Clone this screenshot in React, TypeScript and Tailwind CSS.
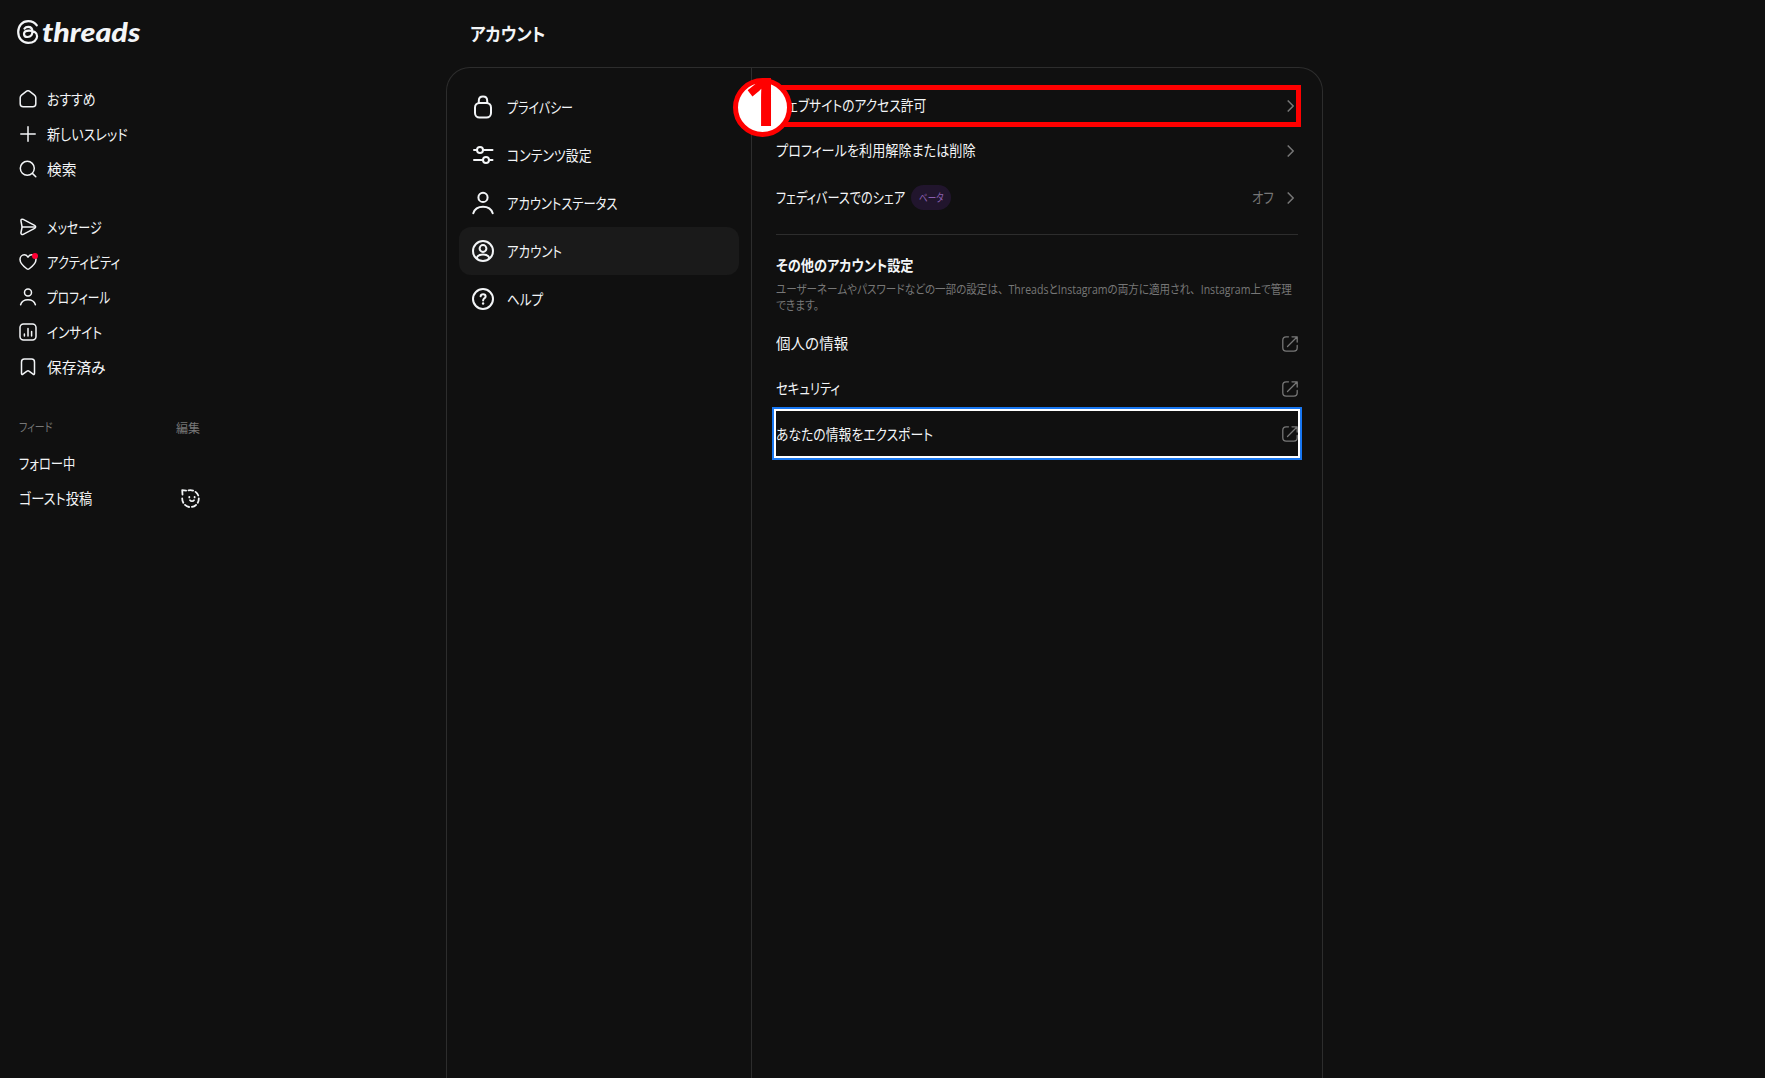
import type { ReactNode } from "react";
import { twMerge } from "tailwind-merge";

const Icon: React.FC<{
  className?: string;
  box?: number;
  stroke?: number;
  children: ReactNode;
}> = (props) => (
  <svg
    className={twMerge("size-[18px] shrink-0", props.className)}
    viewBox={`0 0 ${props.box ?? 18} ${props.box ?? 18}`}
    fill="none"
    stroke="currentColor"
    strokeWidth={props.stroke ?? 1.5}
    strokeLinecap="round"
    strokeLinejoin="round"
  >
    {props.children}
  </svg>
);

const Label: React.FC<{ className?: string; children: ReactNode }> = (
  props,
) => (
  <span
    className={twMerge(
      "block origin-left scale-x-[0.82] whitespace-nowrap",
      props.className,
    )}
  >
    {props.children}
  </span>
);

const Logo = () => (
  <div className="flex h-8 items-center pl-[17px] text-[#f3f5f7]">
    <svg
      className="h-6 w-[22px]"
      viewBox="0 0 22 24"
      fill="none"
      stroke="currentColor"
      strokeWidth="2.2"
      strokeLinecap="round"
    >
      <path d="M19.800 5.400C18 2.600 14.900 1.100 11.200 1.100 5.300 1.100 1.200 5.600 1.200 12s4.100 10.900 10 10.900c5.200 0 8.900-2.700 8.900-6.600 0-3.900-3.700-5.700-8-5.700-3.300 0-5.100 1.400-5.100 3.300s1.600 3.100 3.700 3.100c3.100 0 4.700-2 4.700-5.400 0-3.200-1.500-4.800-4.200-4.800-1.600 0-2.900.6-3.700 1.800" />
    </svg>
    <span className="ml-[3px] origin-left scale-x-[1.17] font-[Lato] text-[26px] leading-8 font-black italic">
      threads
    </span>
  </div>
);

const NavItem: React.FC<{
  icon: ReactNode;
  label: string;
  className?: string;
}> = (props) => (
  <a className="flex h-[35px] items-center gap-[10px] pl-[19px]">
    {props.icon}
    <Label className={props.className}>{props.label}</Label>
  </a>
);

const Sidebar = () => (
  <nav className="flex w-[220px] shrink-0 flex-col pt-4">
    <Logo />
    <div className="mt-[33px] flex flex-col">
      <NavItem
        label="おすすめ"
        className="scale-x-[0.86]"
        icon={
          <Icon>
            <path d="M1.200 7.800c0-1.100.4-2 1.300-2.700L7.600 1.200c.9-.6 1.900-.6 2.800 0l5.100 3.900c.9.7 1.300 1.600 1.300 2.700v6c0 2-1 3-3 3H4.200c-2 0-3-1-3-3z" />
          </Icon>
        }
      />
      <NavItem
        label="新しいスレッド"
        className="scale-x-[0.875]"
        icon={
          <Icon>
            <path d="M9 1.800v14.400M1.800 9h14.400" />
          </Icon>
        }
      />
      <NavItem
        label="検索"
        className="scale-x-[0.98]"
        icon={
          <Icon>
            <circle cx="8.300" cy="8.300" r="7" />
            <path d="m13.400 13.400 3.400 3.400" />
          </Icon>
        }
      />
    </div>
    <div className="mt-[23px] flex flex-col">
      <NavItem
        label="メッセージ"
        className="scale-x-[0.8]"
        icon={
          <Icon>
            <path d="M2 3.200c-.3-1.600.8-2.500 2.200-1.800l11.400 6c1.400.7 1.400 2.200 0 2.900l-11.400 6C2.800 17 1.700 16 2 14.500L3.100 9z" />
            <path d="M3.100 9h13" />
          </Icon>
        }
      />
      <NavItem
        label="アクティビティ"
        icon={
          <span className="relative">
            <Icon>
              <path d="M1 6.500c0-2.700 1.900-4.700 4.300-4.700C7 1.800 8.200 2.700 9 4.200c.8-1.500 2-2.400 3.700-2.400C15.100 1.800 17 3.800 17 6.500c0 4-4.400 7.500-7.100 9.500-.6.400-1.200.4-1.800 0C5.400 14 1 10.500 1 6.500z" />
            </Icon>
            <span className="absolute top-0 -right-px size-[6px] rounded-full bg-[#ff0034]" />
          </span>
        }
      />
      <NavItem
        label="プロフィール"
        className="scale-x-[0.78]"
        icon={
          <Icon>
            <circle cx="9" cy="4.600" r="3.500" />
            <path d="M1.600 16.800c1-3.300 3.800-5 7.400-5s6.400 1.700 7.400 5" />
          </Icon>
        }
      />
      <NavItem
        label="インサイト"
        className="scale-x-[0.84]"
        icon={
          <Icon>
            <rect x="1" y="1" width="16" height="16" rx="3.500" />
            <path d="M5.400 11v2M9 5.500V13M12.600 8.500V13" />
          </Icon>
        }
      />
      <NavItem
        label="保存済み"
        className="scale-x-[0.98]"
        icon={
          <Icon>
            <path d="M2.500 4c0-1.900 1-2.900 2.900-2.900h7.200c1.900 0 2.900 1 2.900 2.900v11.600c0 .9-.8 1.200-1.400.6L10 13.100c-.6-.5-1.400-.5-2 0l-4.100 3.100c-.6.6-1.400.3-1.400-.6z" />
          </Icon>
        }
      />
    </div>
    <div className="mt-[34px] flex h-[18px] w-[200px] items-center justify-between pl-[19px] text-xs text-[#777777]">
      <Label className="scale-x-[0.83]">フィード</Label>
      <Label className="scale-x-100 pt-px">編集</Label>
    </div>
    <div className="mt-[9px] flex w-[200px] flex-col pl-[19px]">
      <a className="flex h-[35px] items-center">
        <Label>フォロー中</Label>
      </a>
      <a className="flex h-[35px] items-center justify-between">
        <Label className="scale-x-[0.88]">ゴースト投稿</Label>
        <Icon className="mt-px size-[19px]" box={19} stroke={1.8}>
          <path d="M1.500 5.500 1.200 1.200l3.900.4" />
          <path
            d="M7.500 1.300c5.600-1 10.300 2.800 10.300 8.200s-4.200 8.600-8.500 8.600S1.200 14.200 1.200 9.500V8"
            strokeDasharray="4.600 2.800"
          />
          <path d="M8.300 7.800v.6M13.600 7.800v.6M9 11.200c1 1.300 3 1.300 4 0" />
        </Icon>
      </a>
    </div>
  </nav>
);

const MenuItem: React.FC<{
  icon: ReactNode;
  label: string;
  active?: boolean;
  className?: string;
}> = (props) => (
  <a
    className={twMerge(
      "flex h-12 items-center gap-3 rounded-xl pl-3",
      props.active && "bg-[#1a1a1a]",
    )}
  >
    <Icon className="size-6" box={24} stroke={2}>
      {props.icon}
    </Icon>
    <Label className={props.className}>{props.label}</Label>
  </a>
);

const SettingsMenu = () => (
  <div className="flex w-[305px] shrink-0 flex-col border-r border-[#2d2d2d] px-3 pt-[15px]">
    <MenuItem
      label="プライバシー"
      className="scale-x-[0.8]"
      icon={
        <>
          <rect x="4" y="8" width="16" height="14.500" rx="4.500" />
          <path d="M7.800 8V5.800c0-2.600 1.700-4.300 4.200-4.300s4.200 1.700 4.200 4.300V8" />
        </>
      }
    />
    <MenuItem
      label="コンテンツ設定"
      className="scale-x-[0.86]"
      icon={
        <>
          <circle cx="9" cy="7" r="3" />
          <circle cx="15" cy="17" r="3" />
          <path d="M3 7h3M12 7h9.500M3 17h9M18 17h3.500" />
        </>
      }
    />
    <MenuItem
      label="アカウントステータス"
      icon={
        <>
          <circle cx="12" cy="6.400" r="4.600" />
          <path d="M2.300 22.200c1.400-4.300 5-6.400 9.700-6.400s8.300 2.100 9.700 6.400" />
        </>
      }
    />
    <MenuItem
      active
      label="アカウント"
      className="scale-x-[0.83]"
      icon={
        <>
          <circle cx="12" cy="12" r="10" />
          <circle cx="12" cy="9.500" r="3.400" />
          <path d="M5.600 19c1-2.400 3.500-3.400 6.400-3.400s5.400 1 6.400 3.400" />
        </>
      }
    />
    <MenuItem
      label="ヘルプ"
      className="scale-x-[0.84]"
      icon={
        <>
          <circle cx="12" cy="12" r="10" />
          <path d="M9.600 9.300c.2-1.300 1.200-2 2.500-2 1.400 0 2.500.8 2.500 2.100 0 1.900-2.500 2-2.500 4" />
          <path d="M12.100 16.500v.1" strokeWidth="2.400" />
        </>
      }
    />
  </div>
);

const Chevron = () => (
  <svg
    className="mr-1 h-3 w-[7px] shrink-0 text-[#777777]"
    viewBox="0 0 7 12"
    fill="none"
    stroke="currentColor"
    strokeWidth="1.500"
  >
    <path d="m.7.500 5.500 5.500L.7 11.500" />
  </svg>
);

const ExternalLink = () => (
  <Icon className="mt-px size-4 text-[#777777]" box={16} stroke={1.3}>
    <path d="M6.500.8H4.200C2 .8.8 2 .8 4.200v7.600c0 2.200 1.200 3.400 3.400 3.400h7.600c2.200 0 3.400-1.200 3.400-3.400V9.500" />
    <path d="M10 .8h5.200V6M15 1 5.500 10.500" />
  </Icon>
);

const Row: React.FC<{
  className?: string;
  children: ReactNode;
}> = (props) => (
  <a
    className={twMerge(
      "flex h-[45px] shrink-0 items-center justify-between",
      props.className,
    )}
  >
    {props.children}
  </a>
);

const Comma = () => <span className="[font-feature-settings:normal]">、</span>;

const AccountSettings = () => (
  <div className="relative flex min-w-0 grow flex-col px-6 pt-[15px]">
    <Row>
      <Label className="-mt-0.5 scale-x-[0.85]">
        ウェブサイトのアクセス許可
      </Label>
      <Chevron />
    </Row>
    <Row>
      <Label className="-mt-0.5 scale-x-[0.875]">
        プロフィールを利用解除または削除
      </Label>
      <Chevron />
    </Row>
    <Row className="h-[49px]">
      <div className="flex items-center">
        <Label className="-mt-0.5 w-[129px] scale-x-[0.81]">
          フェディバースでのシェア
        </Label>
        <span className="ml-[6px] flex h-[25px] w-10 items-center rounded-full bg-[#21152d] pl-2 text-[11px] text-[#8a5fae]">
          <Label className="-mt-0.5 scale-x-[0.78]">ベータ</Label>
        </span>
      </div>
      <span className="flex items-center gap-[13px] text-[#777777]">
        <Label className="-mt-0.5 w-[22px]">オフ</Label>
        <Chevron />
      </span>
    </Row>
    <hr className="mt-3 border-[#2d2d2d]" />
    <h2 className="mt-5 flex h-5 items-center font-bold">
      <Label className="scale-x-[0.88]">その他のアカウント設定</Label>
    </h2>
    <p className="mt-[7px] flex flex-col font-['Open_Sans','Noto_Sans_CJK_JP',sans-serif] text-xs leading-4 text-[#777777]">
      <Label className="scale-x-[0.88]">
        ユーザーネームやパスワードなどの一部の設定は
        <Comma />
        ThreadsとInstagramの両方に適用され
        <Comma />
        Instagram上で管理
      </Label>
      <Label className="scale-x-[0.89]">できます。</Label>
    </p>
    <Row className="mt-[7px]">
      <Label className="-mt-0.5 scale-x-[0.97]">個人の情報</Label>
      <ExternalLink />
    </Row>
    <Row>
      <Label className="-mt-0.5 scale-x-[0.825]">セキュリティ</Label>
      <ExternalLink />
    </Row>
    <Row className="shadow-[0_0_0_2px_#ffffff,0_0_0_4px_#1877f2]">
      <Label className="scale-x-[0.855]">あなたの情報をエクスポート</Label>
      <ExternalLink />
    </Row>

    <div className="absolute top-[17px] right-[21px] left-[10px] h-[42px] border-5 border-[#ff0000]" />
    <div className="absolute top-[10px] -left-[19px] flex size-[59px] justify-center rounded-full border-5 border-[#ff0000] bg-white font-['Open_Sans'] text-[66px] leading-[35px] font-bold text-[#ff0000]">
      1
    </div>
  </div>
);

export default function App() {
  return (
    <div className="flex h-[1078px] w-[1765px] overflow-hidden bg-[#101010] font-['Noto_Sans_CJK_JP',sans-serif] text-[15px] leading-5 text-[#f3f5f7] [font-feature-settings:'palt']">
      <Sidebar />
      <main className="ml-[226px] flex w-[877px] flex-col">
        <h1 className="flex h-[67px] items-center pb-0.5 pl-6 text-lg font-bold">
          <Label className="scale-x-[0.92]">アカウント</Label>
        </h1>
        <div className="flex grow rounded-t-3xl border border-b-0 border-[#2d2d2d]">
          <SettingsMenu />
          <AccountSettings />
        </div>
      </main>
    </div>
  );
}
